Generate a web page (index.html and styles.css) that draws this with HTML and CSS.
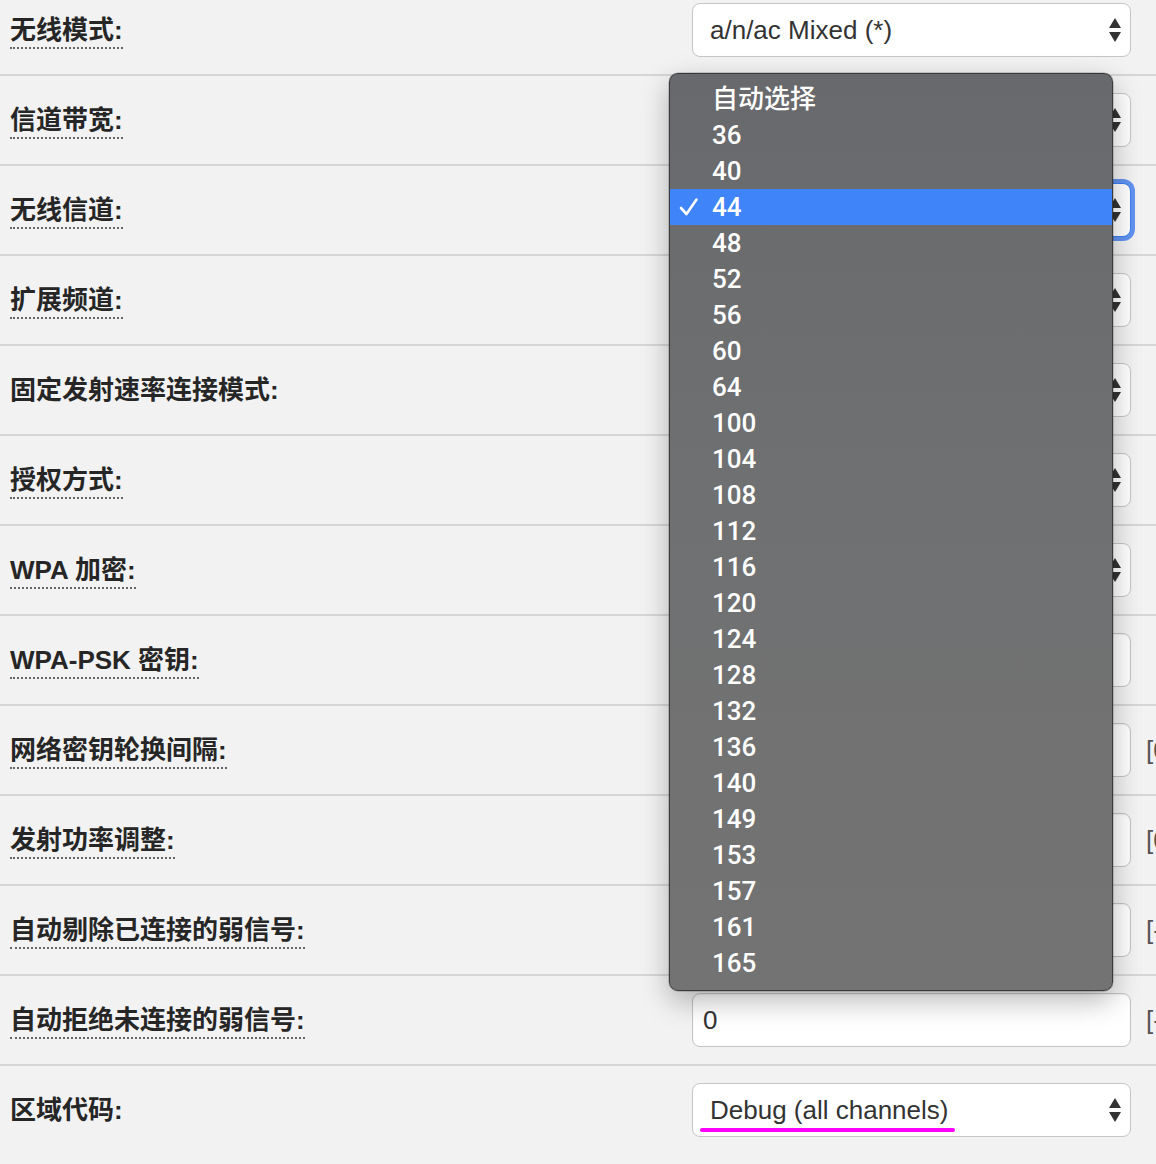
FILE: index.html
```html
<!DOCTYPE html>
<html lang="zh">
<head>
<meta charset="utf-8">
<title>无线设置</title>
<link rel="stylesheet" href="styles.css">
</head>
<body>
<div class="page">
  <div class="row">
    <div class="label"><span class="lbl dotted">无线模式:</span></div>
    <div class="select"><span class="val">a/n/ac Mixed (*)</span><svg class="arrows" viewBox="0 0 12 24"><path d="M0 10 L6 0 L12 10 Z M0 14 L6 24 L12 14 Z"/></svg></div>
  </div>
  <div class="row">
    <div class="label"><span class="lbl dotted">信道带宽:</span></div>
    <div class="select"><span class="val"></span><svg class="arrows" viewBox="0 0 12 24"><path d="M0 10 L6 0 L12 10 Z M0 14 L6 24 L12 14 Z"/></svg></div>
  </div>
  <div class="row">
    <div class="label"><span class="lbl dotted">无线信道:</span></div>
    <div class="select focus"><span class="val"></span><svg class="arrows" viewBox="0 0 12 24"><path d="M0 10 L6 0 L12 10 Z M0 14 L6 24 L12 14 Z"/></svg></div>
  </div>
  <div class="row">
    <div class="label"><span class="lbl dotted">扩展频道:</span></div>
    <div class="select"><span class="val"></span><svg class="arrows" viewBox="0 0 12 24"><path d="M0 10 L6 0 L12 10 Z M0 14 L6 24 L12 14 Z"/></svg></div>
  </div>
  <div class="row">
    <div class="label"><span class="lbl">固定发射速率连接模式:</span></div>
    <div class="select"><span class="val"></span><svg class="arrows" viewBox="0 0 12 24"><path d="M0 10 L6 0 L12 10 Z M0 14 L6 24 L12 14 Z"/></svg></div>
  </div>
  <div class="row">
    <div class="label"><span class="lbl dotted">授权方式:</span></div>
    <div class="select"><span class="val"></span><svg class="arrows" viewBox="0 0 12 24"><path d="M0 10 L6 0 L12 10 Z M0 14 L6 24 L12 14 Z"/></svg></div>
  </div>
  <div class="row">
    <div class="label"><span class="lbl dotted">WPA 加密:</span></div>
    <div class="select"><span class="val"></span><svg class="arrows" viewBox="0 0 12 24"><path d="M0 10 L6 0 L12 10 Z M0 14 L6 24 L12 14 Z"/></svg></div>
  </div>
  <div class="row">
    <div class="label"><span class="lbl dotted">WPA-PSK 密钥:</span></div>
    <div class="input"></div>
  </div>
  <div class="row">
    <div class="label"><span class="lbl dotted">网络密钥轮换间隔:</span></div>
    <div class="input"></div>
    <span class="hint">[0-2592000]</span>
  </div>
  <div class="row">
    <div class="label"><span class="lbl dotted">发射功率调整:</span></div>
    <div class="input"></div>
    <span class="hint">[0-100]</span>
  </div>
  <div class="row">
    <div class="label"><span class="lbl dotted">自动剔除已连接的弱信号:</span></div>
    <div class="input"></div>
    <span class="hint">[-100-0]</span>
  </div>
  <div class="row">
    <div class="label"><span class="lbl dotted">自动拒绝未连接的弱信号:</span></div>
    <div class="input"><span class="val">0</span></div>
    <span class="hint">[-100-0]</span>
  </div>
  <div class="row last">
    <div class="label"><span class="lbl">区域代码:</span></div>
    <div class="select"><span class="val">Debug (all channels)</span><span class="mark"></span><svg class="arrows" viewBox="0 0 12 24"><path d="M0 10 L6 0 L12 10 Z M0 14 L6 24 L12 14 Z"/></svg></div>
  </div>

  <div class="menu">
    <div class="item">自动选择</div>
    <div class="item">36</div>
    <div class="item">40</div>
    <div class="item sel"><svg class="check" viewBox="0 0 20 20"><polyline points="2,11 7.5,17 17.5,2.5"/></svg>44</div>
    <div class="item">48</div>
    <div class="item">52</div>
    <div class="item">56</div>
    <div class="item">60</div>
    <div class="item">64</div>
    <div class="item">100</div>
    <div class="item">104</div>
    <div class="item">108</div>
    <div class="item">112</div>
    <div class="item">116</div>
    <div class="item">120</div>
    <div class="item">124</div>
    <div class="item">128</div>
    <div class="item">132</div>
    <div class="item">136</div>
    <div class="item">140</div>
    <div class="item">149</div>
    <div class="item">153</div>
    <div class="item">157</div>
    <div class="item">161</div>
    <div class="item">165</div>
  </div>
</div>
</body>
</html>
```
FILE: styles.css
```css
html, body {
  margin: 0;
  padding: 0;
  background: #f2f2f2;
  overflow: hidden;
}
body {
  font-family: "Liberation Sans", "Noto Sans CJK SC", sans-serif;
  color: #2b2b2b;
  width: 1156px;
  height: 1164px;
}
.page {
  position: relative;
  margin-top: -14px;
}
.row {
  display: grid;
  grid-template-columns: 692px 439px auto;
  align-items: center;
  height: 88px;
  border-bottom: 2px solid #d6d6d6;
  white-space: nowrap;
}
.row.last {
  border-bottom: none;
}
.label {
  padding-left: 10px;
  padding-top: 4px;
}
.lbl {
  display: inline-block;
  font-size: 26px;
  font-weight: bold;
  line-height: 28px;
  color: #262626;
  padding-bottom: 3px;
  border-bottom: 2px solid transparent;
}
.lbl.dotted {
  border-bottom: 2px dotted #666;
}
.select, .input {
  position: relative;
  box-sizing: border-box;
  height: 54px;
  background: #fff;
  border: 1px solid #c6c6c6;
  border-radius: 8px;
  display: flex;
  align-items: center;
  font-size: 26px;
  color: #333;
}
.select {
  padding: 0 9px 0 17px;
  justify-content: space-between;
}
.select.focus {
  border-color: #3d7ef0;
  box-shadow: 0 0 0 4px rgba(72, 130, 240, 0.85);
}
.input {
  padding: 0 10px;
  border-color: #c4c4c4;
  box-shadow: inset 0 1px 2px rgba(0,0,0,0.06);
}
.arrows {
  width: 12px;
  height: 24px;
  fill: #333;
}
.mark {
  position: absolute;
  left: 7px;
  top: 44px;
  width: 255px;
  height: 4px;
  border-radius: 2px;
  background: #ff00ff;
}
.hint {
  padding-left: 15px;
  font-size: 26px;
  color: #555;
}
.menu {
  position: absolute;
  left: 669px;
  top: 87px;
  width: 444px;
  box-sizing: border-box;
  padding: 7px 0 9px;
  border: 1px solid #3a3a3a;
  border-radius: 9px;
  background: linear-gradient(180deg, #68696c 0%, #6f7071 45%, #737373 100%);
  box-shadow: 0 10px 28px rgba(0,0,0,0.28), 0 0 0 0.5px rgba(0,0,0,0.3);
}
.item {
  position: relative;
  height: 36px;
  line-height: 36px;
  padding-left: 42px;
  font-family: Roboto, "Noto Sans CJK SC", sans-serif;
  font-weight: 500;
  font-size: 26px;
  color: #fff;
}
.item.sel {
  background: #3f84f9;
}
.check {
  position: absolute;
  left: 9px;
  top: 8px;
  width: 20px;
  height: 20px;
  fill: none;
  stroke: #fff;
  stroke-width: 2.6;
  stroke-linecap: round;
  stroke-linejoin: round;
}
```
